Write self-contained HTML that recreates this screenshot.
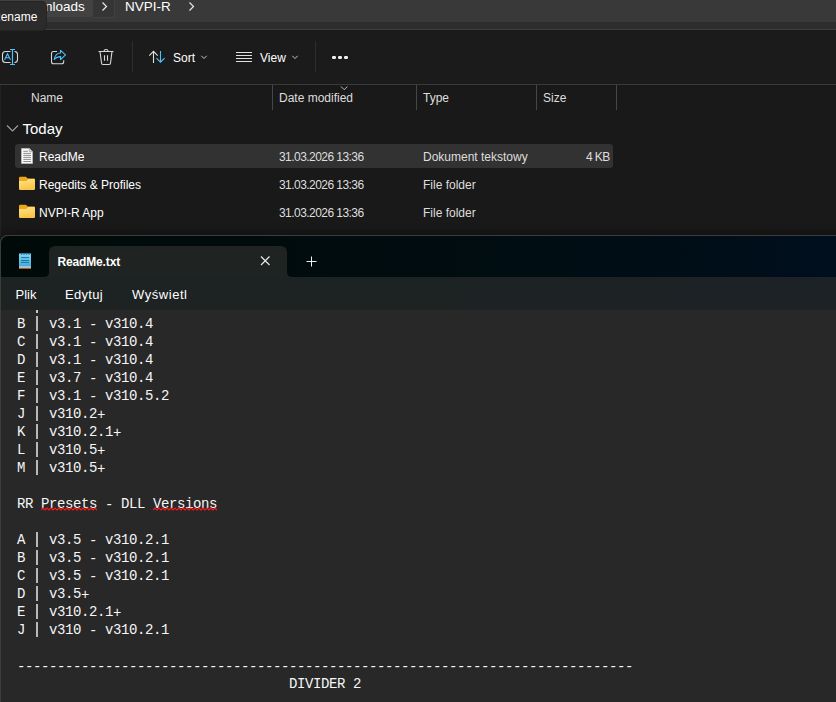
<!DOCTYPE html>
<html><head><meta charset="utf-8">
<style>
*{margin:0;padding:0;box-sizing:border-box}
html,body{width:836px;height:702px;overflow:hidden;background:#191919;font-family:"Liberation Sans",sans-serif;color:#fff;position:relative}
.a{position:absolute}
.t{position:absolute;white-space:pre;line-height:1}
.f12{font-size:12px}
.hd{color:#dedede}
.sep{position:absolute;width:1px;background:#464646}
.mono{position:absolute;font-family:"Liberation Mono",monospace;font-size:14px;letter-spacing:-0.4px;line-height:18px;color:#f6f6f6;white-space:pre}
.hy{position:relative;top:1px}.bar{position:relative;color:transparent}.bar::after{content:"";position:absolute;left:3px;top:-0.3px;width:1.5px;height:15px;background:#b8b8b8}
</style></head><body>
<!-- address bar -->
<div class="a" style="left:0;top:0;width:836px;height:22px;background:#393939"></div>
<div class="a" style="left:0;top:22px;width:836px;height:7px;background:#2d2d2d"></div>
<div class="a" style="left:0;top:29px;width:836px;height:1px;background:#3e3e3e"></div>
<div class="a" style="left:0;top:30px;width:836px;height:54px;background:#1b1b1b"></div>
<div class="a" style="left:0;top:0;width:93px;height:17px;background:#424242"></div>
<div class="a" style="left:93px;top:-3px;width:22px;height:21px;background:#353535;border:1px solid #404040;border-top:none;border-left:none;border-radius:0 0 4px 0"></div>
<div class="t" style="left:18px;top:0px;font-size:13.5px">Downloads</div>
<svg class="a" style="left:100px;top:1px" width="10" height="11" viewBox="0 0 10 11"><path d="M2.5 1.5 L6.5 5.5 L2.5 9.5" fill="none" stroke="#e8e8e8" stroke-width="1.2"/></svg>
<div class="t" style="left:125px;top:0px;font-size:13.5px">NVPI-R</div>
<svg class="a" style="left:187px;top:1px" width="10" height="11" viewBox="0 0 10 11"><path d="M2.5 1.5 L6.5 5.5 L2.5 9.5" fill="none" stroke="#e8e8e8" stroke-width="1.2"/></svg>

<!-- tooltip -->
<div class="a" style="left:-6px;top:0.5px;width:52.5px;height:30px;background:#2b2b2b;border:1px solid #252525;border-radius:5px"></div>
<div class="t f12" style="left:-8px;top:10.5px">Rename</div>

<!-- toolbar icons -->
<svg class="a" style="left:0;top:46px" width="20" height="22" viewBox="0 0 20 22">
  <path d="M10.5 5.5 H5.5 A3 3 0 0 0 2.5 8.5 V13.5 A3 3 0 0 0 5.5 16.5 H10.5" fill="none" stroke="#d8d8d8" stroke-width="1.1"/>
  <path d="M14.5 5.5 H14.8 A3 3 0 0 1 17.5 8.5 V13.5 A3 3 0 0 1 14.8 16.5 H14.5" fill="none" stroke="#d8d8d8" stroke-width="1.1"/>
  <path d="M12.5 3.5 V18.5 M10 3.5 H15 M10 18.5 H15" fill="none" stroke="#4cc2ff" stroke-width="1.2"/>
  <path d="M4.6 13.8 L7.5 7.8 L10.4 13.8 M5.6 11.8 H9.4" fill="none" stroke="#4cc2ff" stroke-width="1.1"/>
</svg>
<svg class="a" style="left:48px;top:46px" width="20" height="22" viewBox="0 0 20 22">
  <path d="M9 5.5 H5.5 A2 2 0 0 0 3.5 7.5 V15.8 A2 2 0 0 0 5.5 17.8 H13.7 A2 2 0 0 0 15.7 15.8 V14.2" fill="none" stroke="#d8d8d8" stroke-width="1.1"/>
  <path d="M6.2 13.4 C7 9.5 9.5 7 12.5 7 V4.3 L17.5 8.9 L12.6 13.6 V10.6 C10 10.4 8 11.5 6.2 13.4 Z" fill="none" stroke="#4cc2ff" stroke-width="1.1" stroke-linejoin="round"/>
</svg>
<svg class="a" style="left:96px;top:46px" width="20" height="22" viewBox="0 0 20 22">
  <path d="M2.5 5.5 H17.5 M8 5.5 A2 2 0 0 1 12 5.5 M4 5.5 L5.5 17 A1.5 1.5 0 0 0 7 18.5 H13 A1.5 1.5 0 0 0 14.5 17 L16 5.5 M8.5 9.2 V14.8 M11.5 9.2 V14.8" fill="none" stroke="#d8d8d8" stroke-width="1.1"/>
</svg>
<div class="sep" style="left:132px;top:41px;height:31px;background:#2e2e2e"></div>
<svg class="a" style="left:146px;top:48px" width="22" height="18" viewBox="0 0 22 18">
  <path d="M7.5 3.4 V15 M3.3 7.6 L7.5 3.4 L11.7 7.6" fill="none" stroke="#e0e0e0" stroke-width="1.1"/>
  <path d="M14.5 3 V14.2 M10.4 10.1 L14.5 14.2 L18.6 10.1" fill="none" stroke="#4cc2ff" stroke-width="1.1"/>
</svg>
<div class="t f12" style="left:173px;top:52px">Sort</div>
<svg class="a" style="left:199px;top:53px" width="10" height="8" viewBox="0 0 10 8"><path d="M2.3 2.8 L5 5.5 L7.7 2.8" fill="none" stroke="#c8c8c8" stroke-width="1"/></svg>
<svg class="a" style="left:234px;top:48px" width="20" height="18" viewBox="0 0 20 18">
  <path d="M2 4.5 H18 M2 7.5 H18 M2 10.5 H18 M2 13.5 H18" fill="none" stroke="#e0e0e0" stroke-width="1.1"/>
</svg>
<div class="t f12" style="left:260px;top:52px">View</div>
<svg class="a" style="left:290px;top:53px" width="10" height="8" viewBox="0 0 10 8"><path d="M2.3 2.8 L5 5.5 L7.7 2.8" fill="none" stroke="#c8c8c8" stroke-width="1"/></svg>
<div class="sep" style="left:315px;top:41px;height:31px;background:#2e2e2e"></div>
<svg class="a" style="left:328px;top:52px" width="24" height="12" viewBox="0 0 24 12">
  <rect x="4" y="4" width="4" height="3" rx="1.2" fill="#f0f0f0"/><rect x="10" y="4" width="4" height="3" rx="1.2" fill="#f0f0f0"/><rect x="16" y="4" width="4" height="3" rx="1.2" fill="#f0f0f0"/>
</svg>

<!-- header -->
<div class="a" style="left:0;top:84px;width:836px;height:1px;background:#3a3a3a"></div>
<div class="t f12 hd" style="left:31px;top:92px">Name</div>
<div class="sep" style="left:272px;top:85px;height:25px"></div>
<svg class="a" style="left:338px;top:84px" width="12" height="8" viewBox="0 0 12 8"><path d="M3 2.5 L6.2 5.7 L9.4 2.5" fill="none" stroke="#bdbdbd" stroke-width="1"/></svg>
<div class="t f12 hd" style="left:279px;top:92px">Date modified</div>
<div class="sep" style="left:416px;top:85px;height:25px"></div>
<div class="t f12 hd" style="left:423px;top:92px">Type</div>
<div class="sep" style="left:536px;top:85px;height:25px"></div>
<div class="t f12 hd" style="left:543px;top:92px">Size</div>
<div class="sep" style="left:616px;top:85px;height:25px"></div>

<!-- group -->
<svg class="a" style="left:5px;top:122px" width="16" height="12" viewBox="0 0 16 12"><path d="M2 3.5 L7.5 9 L13 3.5" fill="none" stroke="#a0a0a0" stroke-width="1.1"/></svg>
<div class="t" style="left:22.5px;top:120.5px;font-size:15px">Today</div>

<!-- rows -->
<div class="a" style="left:15px;top:144px;width:598px;height:24px;background:#323232;border-radius:3px"></div>
<svg class="a" style="left:20px;top:147px" width="14" height="18" viewBox="0 0 14 18">
  <path d="M1.5 1.5 H9.3 L12.5 4.7 V16.5 H1.5 Z" fill="#fafafa" stroke="#b8b8b8" stroke-width="0.9"/>
  <path d="M9.3 1.5 V4.7 H12.5 Z" fill="#d8d8d8" stroke="#a8a8a8" stroke-width="0.8"/>
  <path d="M3.3 4.3 H8 M3.3 6.4 H11 M3.3 8.4 H11 M3.3 10.4 H11 M3.3 12.4 H11 M3.3 14.5 H11" stroke="#8e8e8e" stroke-width="1"/>
</svg>
<div class="t f12" style="left:39px;top:151px">ReadMe</div>
<div class="t f12 hd" style="left:279px;top:151px;letter-spacing:-0.55px">31.03.2026 13:36</div>
<div class="t f12 hd" style="left:423px;top:151px">Dokument tekstowy</div>
<div class="t f12 hd" style="left:586px;top:151px;letter-spacing:-0.6px">4 KB</div>

<svg class="a" style="left:18px;top:176px" width="18" height="15" viewBox="0 0 18 15">
  <defs><linearGradient id="fb" x1="0" y1="0" x2="0.3" y2="1"><stop offset="0" stop-color="#ffe38f"/><stop offset="1" stop-color="#f9c643"/></linearGradient></defs>
  <path d="M1 2 A1.2 1.2 0 0 1 2.2 0.8 H7.8 L9.8 2.6 H15.8 A1.2 1.2 0 0 1 17 3.8 V7 H1 Z" fill="#eba81a"/>
  <path d="M1 4.9 H8.3 L10.3 2.9 H15.8 A1.2 1.2 0 0 1 17 4.1 V12.8 A1.2 1.2 0 0 1 15.8 14 H2.2 A1.2 1.2 0 0 1 1 12.8 Z" fill="url(#fb)"/>
</svg>
<div class="t f12" style="left:39px;top:179px">Regedits &amp; Profiles</div>
<div class="t f12 hd" style="left:279px;top:179px;letter-spacing:-0.55px">31.03.2026 13:36</div>
<div class="t f12 hd" style="left:423px;top:179px">File folder</div>

<svg class="a" style="left:18px;top:204px" width="18" height="15" viewBox="0 0 18 15">
  <path d="M1 2 A1.2 1.2 0 0 1 2.2 0.8 H7.8 L9.8 2.6 H15.8 A1.2 1.2 0 0 1 17 3.8 V7 H1 Z" fill="#eba81a"/>
  <path d="M1 4.9 H8.3 L10.3 2.9 H15.8 A1.2 1.2 0 0 1 17 4.1 V12.8 A1.2 1.2 0 0 1 15.8 14 H2.2 A1.2 1.2 0 0 1 1 12.8 Z" fill="url(#fb)"/>
</svg>
<div class="t f12" style="left:39px;top:207px">NVPI-R App</div>
<div class="t f12 hd" style="left:279px;top:207px;letter-spacing:-0.55px">31.03.2026 13:36</div>
<div class="t f12 hd" style="left:423px;top:207px">File folder</div>

<!-- explorer left edge -->
<div class="a" style="left:0;top:85px;width:1px;height:151px;background:#232323"></div>

<!-- notepad window -->
<div class="a" style="left:0;top:235px;width:850px;height:480px;border-radius:8px 0 0 0;background:#3c3c3c;box-shadow:0 -2px 10px rgba(0,0,0,0.35)"></div>
<div class="a" style="left:0;top:235px;width:850px;height:480px;border-radius:8px 0 0 0;background:#3c3c3c;overflow:hidden">
  <div class="a" style="left:1px;top:1px;width:849px;height:480px;border-radius:7px 0 0 0;overflow:hidden;background:#282828">
    <div class="a" style="left:0;top:0;width:849px;height:41px;background:linear-gradient(90deg,#000b09 0%,#000c0d 40%,#000d14 70%,#000f1e 100%)"></div>
    <div class="a" style="left:0;top:41px;width:849px;height:33px;background:linear-gradient(90deg,#1d2222 0%,#1d2223 50%,#1d2227 100%)"></div>
  </div>
</div>
<!-- tab -->
<div class="a" style="left:49px;top:246px;width:238px;height:31px;background:#1f2423;border-radius:6px 6px 0 0"></div>
<div class="a" style="left:45px;top:273px;width:4px;height:4px;background:radial-gradient(circle at 0 0,#000b09 3.5px,#1f2423 4px)"></div>
<div class="a" style="left:287px;top:273px;width:4px;height:4px;background:radial-gradient(circle at 100% 0,#000c0c 3.5px,#1f2423 4px)"></div>
<!-- notepad icon -->
<svg class="a" style="left:18px;top:252px" width="15" height="18" viewBox="0 0 15 18">
  <defs><linearGradient id="nb" x1="0" y1="0" x2="0" y2="1"><stop offset="0" stop-color="#8ad9f7"/><stop offset="1" stop-color="#3aa6d6"/></linearGradient></defs>
  <rect x="1" y="1.5" width="12" height="14" fill="url(#nb)"/>
  <rect x="1" y="14.6" width="12" height="1.2" fill="#eef8fb"/>
  <rect x="1" y="15.8" width="12" height="1.2" fill="#b65a1e"/>
  <path d="M3 5.6 H11 M3 8.5 H11 M3 10.4 H11" stroke="#14759f" stroke-width="1"/>
  <path d="M3.5 1 V3 M6 1 V3 M8.5 1 V3 M11 1 V3" stroke="#1b88b8" stroke-width="1.2"/>
</svg>
<div class="t f12" style="left:57.5px;top:255.8px;font-weight:bold;letter-spacing:-0.15px">ReadMe.txt</div>
<svg class="a" style="left:258px;top:254px" width="14" height="14" viewBox="0 0 14 14"><path d="M3 2.5 L11.5 11 M11.5 2.5 L3 11" stroke="#e8e8e8" stroke-width="1.2"/></svg>
<svg class="a" style="left:304px;top:254px" width="14" height="14" viewBox="0 0 14 14"><path d="M7.5 2.5 V12.5 M2.5 7.5 H12.5" stroke="#f0f0f0" stroke-width="1"/></svg>

<div class="t" style="left:15.5px;top:287.8px;font-size:13px">Plik</div>
<div class="t" style="left:65px;top:287.8px;font-size:13px;letter-spacing:0.3px">Edytuj</div>
<div class="t" style="left:132px;top:287.8px;font-size:13px;letter-spacing:0.55px">Wyświetl</div>

<!-- editor text -->
<div class="a" style="left:36px;top:310px;width:2px;height:3px;background:#c8c8c8"></div>
<div class="mono" style="left:17px;top:315.3px">B <span class="bar">|</span> v3.1 <span class="hy">-</span> v310.4
C <span class="bar">|</span> v3.1 <span class="hy">-</span> v310.4
D <span class="bar">|</span> v3.1 <span class="hy">-</span> v310.4
E <span class="bar">|</span> v3.7 <span class="hy">-</span> v310.4
F <span class="bar">|</span> v3.1 <span class="hy">-</span> v310.5.2
J <span class="bar">|</span> v310.2<span class="hy">+</span>
K <span class="bar">|</span> v310.2.1<span class="hy">+</span>
L <span class="bar">|</span> v310.5<span class="hy">+</span>
M <span class="bar">|</span> v310.5<span class="hy">+</span>

RR Presets <span class="hy">-</span> DLL Versions

A <span class="bar">|</span> v3.5 <span class="hy">-</span> v310.2.1
B <span class="bar">|</span> v3.5 <span class="hy">-</span> v310.2.1
C <span class="bar">|</span> v3.5 <span class="hy">-</span> v310.2.1
D <span class="bar">|</span> v3.5<span class="hy">+</span>
E <span class="bar">|</span> v310.2.1<span class="hy">+</span>
J <span class="bar">|</span> v310 <span class="hy">-</span> v310.2.1

<span class="hy">-----------------------------------------------------------------------------</span>
                                  DIVIDER 2</div>
<svg class="a" style="left:41px;top:507px" width="56" height="4" viewBox="0 0 56 4"><path d="M0 3 L2 1 L4 3 L6 1 L8 3 L10 1 L12 3 L14 1 L16 3 L18 1 L20 3 L22 1 L24 3 L26 1 L28 3 L30 1 L32 3 L34 1 L36 3 L38 1 L40 3 L42 1 L44 3 L46 1 L48 3 L50 1 L52 3 L54 1 L56 3" fill="none" stroke="#ff1a1a" stroke-width="1.1"/></svg>
<svg class="a" style="left:153px;top:507px" width="64" height="4" viewBox="0 0 64 4"><path d="M0 3 L2 1 L4 3 L6 1 L8 3 L10 1 L12 3 L14 1 L16 3 L18 1 L20 3 L22 1 L24 3 L26 1 L28 3 L30 1 L32 3 L34 1 L36 3 L38 1 L40 3 L42 1 L44 3 L46 1 L48 3 L50 1 L52 3 L54 1 L56 3 L58 1 L60 3 L62 1 L64 3" fill="none" stroke="#ff1a1a" stroke-width="1.1"/></svg>
</body></html>
